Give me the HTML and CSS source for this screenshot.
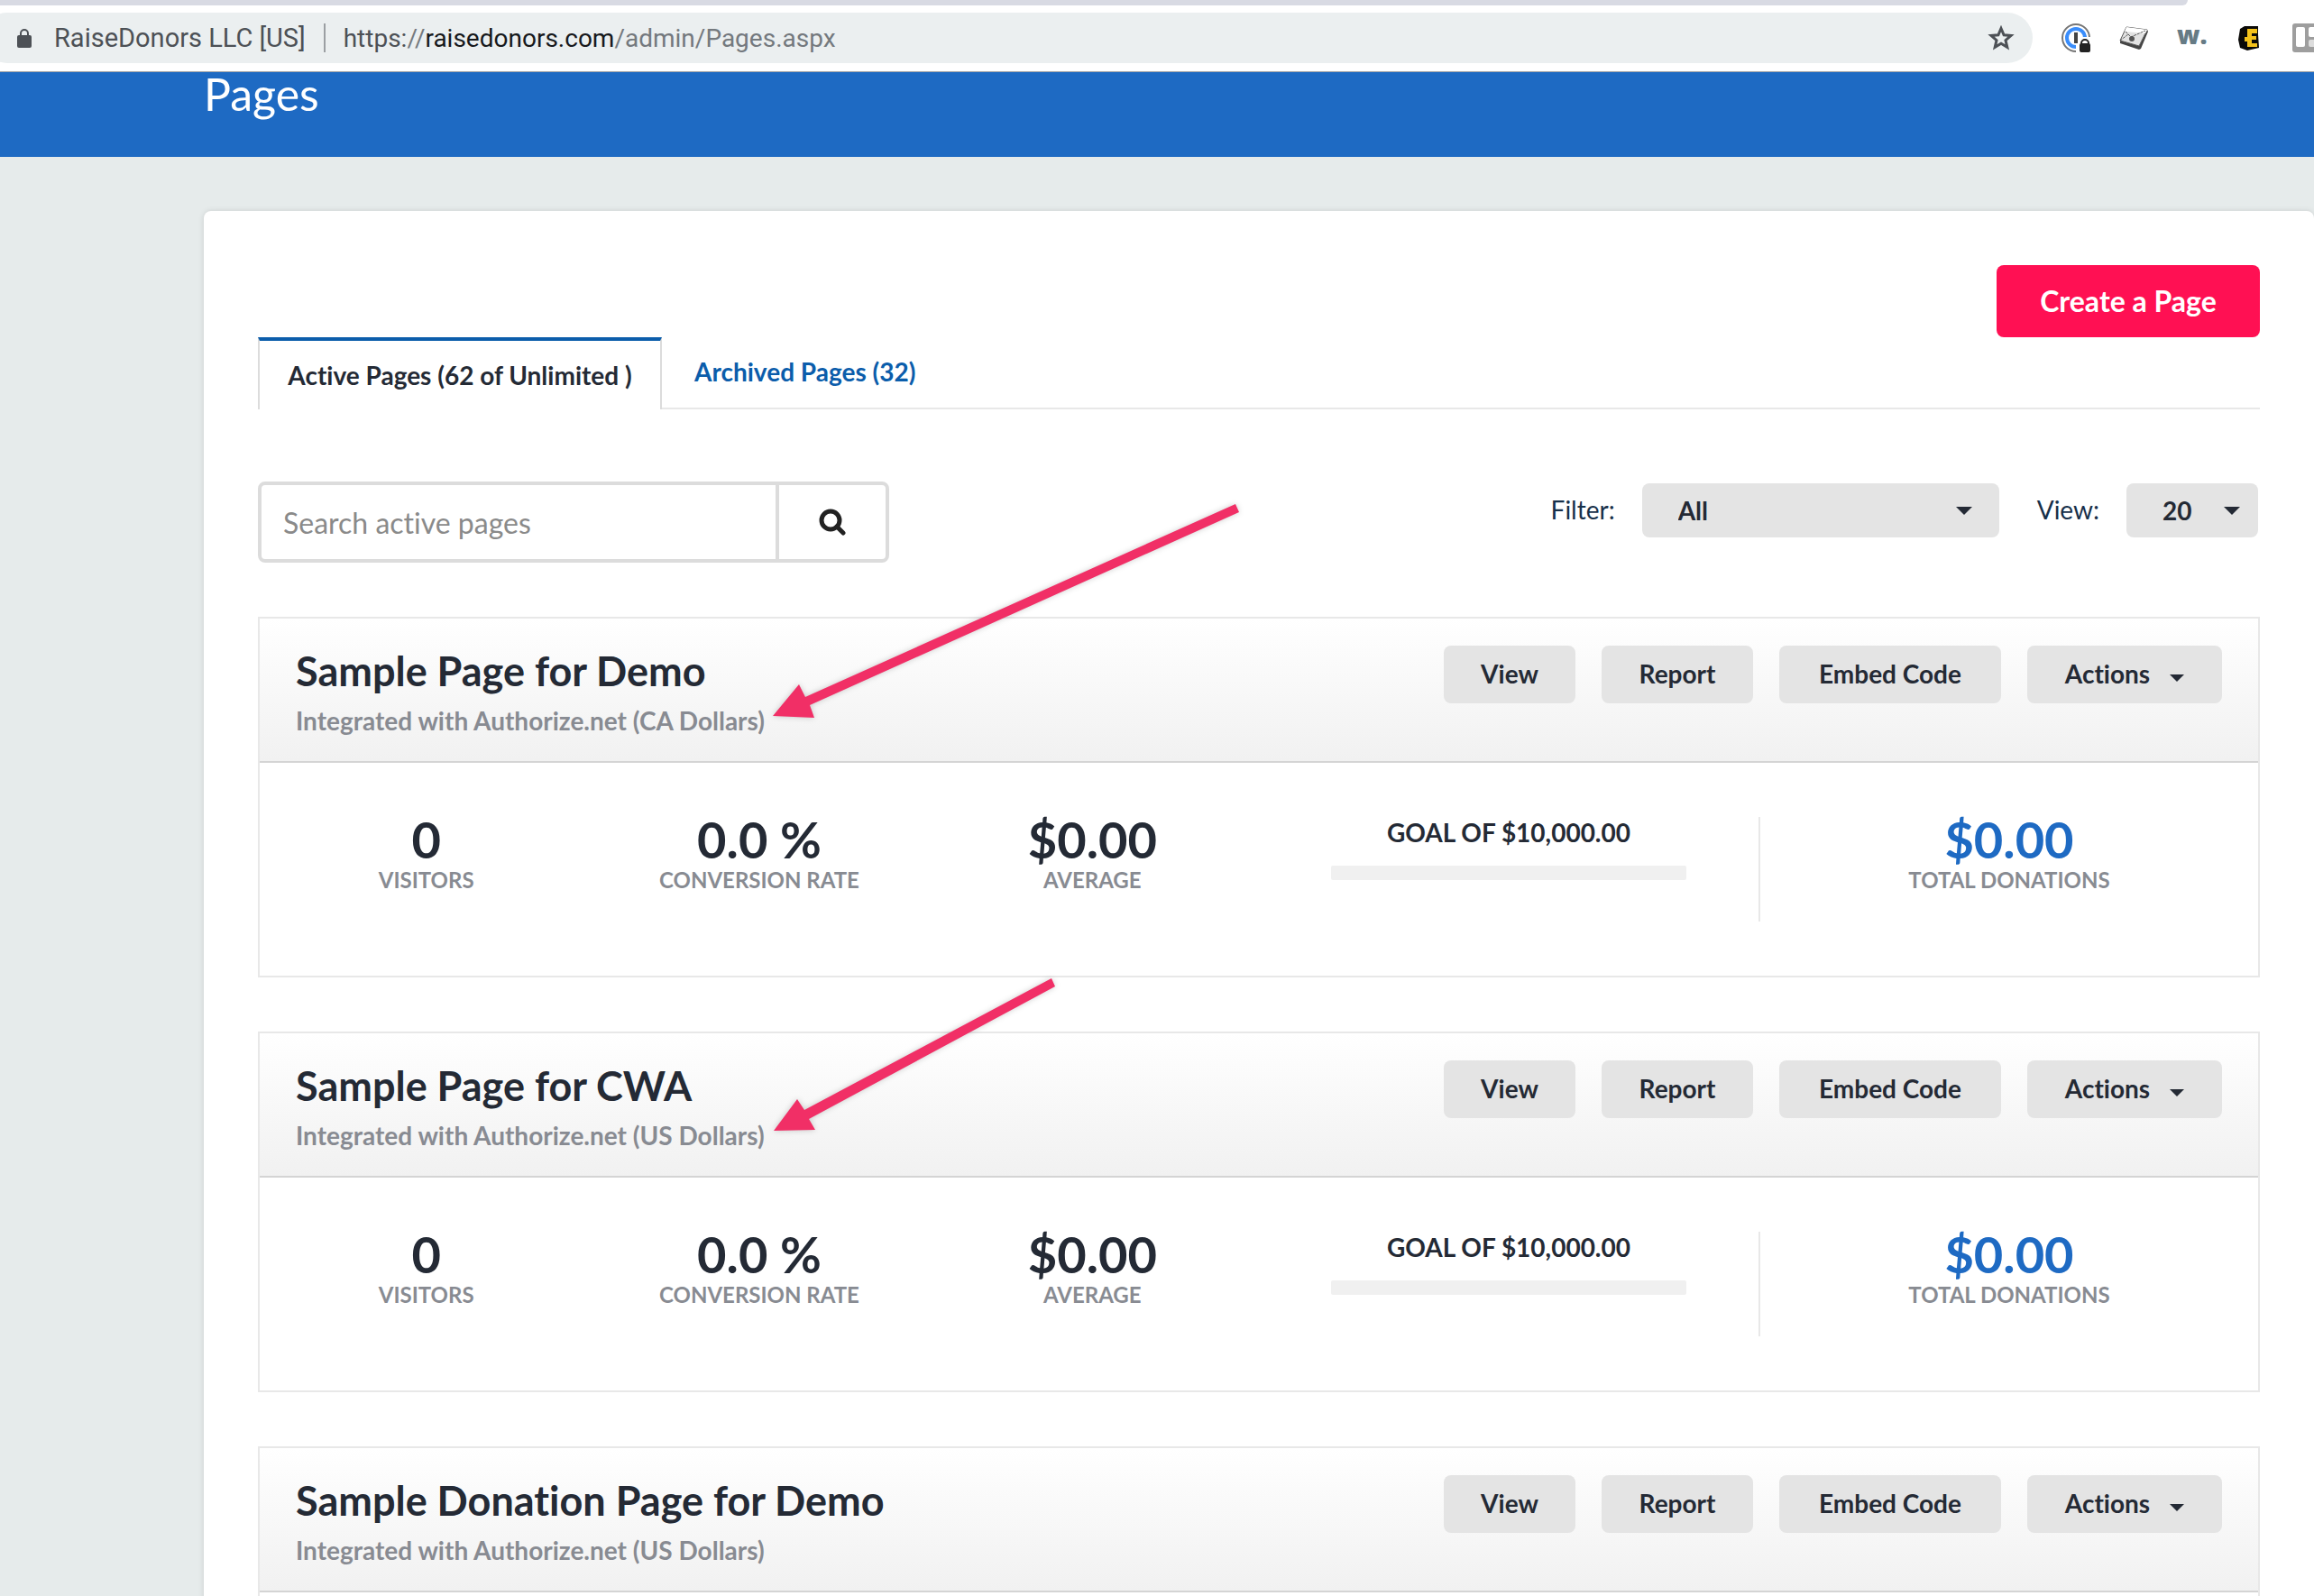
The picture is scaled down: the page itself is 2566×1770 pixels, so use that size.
FILE: index.html
```html
<!DOCTYPE html>
<html lang="en">
<head>
<meta charset="utf-8">
<title>Pages</title>
<link rel="stylesheet" href="styles.css">
</head>
<body>
<div class="browser">
  <div class="tabstrip"></div>
  <div class="toolbar">
    <div class="omnibox">
      <svg class="lock" viewBox="0 0 18 22" width="18" height="22"><rect x="1" y="8" width="16" height="14" rx="2" fill="#4d5156"/><path d="M5 9V6a4 4 0 0 1 8 0v3" fill="none" stroke="#4d5156" stroke-width="2"/></svg>
      <span class="owner">RaiseDonors LLC [US]</span>
      <span class="url"><span class="scheme">https:</span>//<span class="host">raisedonors.com</span>/admin/Pages.aspx</span>
      <svg class="star" viewBox="0 0 30 28" width="30" height="28"><path d="M15 3.500L18.100 10.800L26 11.500L20 16.700L21.800 24.400L15 20.300L8.200 24.400L10 16.700L4 11.500L11.900 10.800Z" fill="none" stroke="#4d5156" stroke-width="3"/></svg>
    </div>
    <div class="extensions">
      <svg viewBox="0 0 32 32" width="32" height="32"><circle cx="16" cy="16" r="15" fill="#fff" stroke="#757575" stroke-width="2"/><circle cx="16" cy="16" r="10" fill="#fff" stroke="#3a8dfb" stroke-width="4"/><path d="M16 15H32V32H16z" fill="#fff"/><rect x="14" y="10" width="4" height="12" fill="#444"/><rect x="20" y="22" width="12" height="10" rx="2" fill="#222"/><path d="M22 23v-1a4 4 0 0 1 8 0v1" fill="none" stroke="#222" stroke-width="2"/></svg>
      <svg viewBox="0 0 32 32" width="32" height="32"><path d="M1 19L1 22L22 29L24 28L32 9L31 7L22 25Z" fill="#444"/><path d="M8 4L31 7L22 25L1 19Z" fill="#e2e2e2" stroke="#555" stroke-width="1"/><path d="M8 4L31 7L29 11L6 9Z" fill="#fff"/><path d="M7 9L13 15L29 8M1 19L10 12" fill="none" stroke="#555" stroke-width="1" stroke-dasharray="3 1"/><circle cx="14" cy="17" r="3" fill="#555"/></svg>
      <span class="w-logo">w.</span>
      <svg viewBox="0 0 32 32" width="32" height="32"><path d="M11 3H26V12L27 27L14 30L6 27L4 18L6 6Z" fill="#0b0a08"/><path d="M14 6H25V11H19V14H24V18H19V22H25V26H14V20H11V15H14Z" fill="#f4c21b"/></svg>
      <svg viewBox="0 0 32 32" width="32" height="32"><rect width="32" height="32" rx="3" fill="#9e9e9e"/><rect x="4" y="4" width="10" height="22" rx="2" fill="#fff"/><rect x="18" y="4" width="10" height="11" rx="2" fill="#fff"/><rect x="18" y="18" width="10" height="8" rx="2" fill="#ddd"/></svg>
    </div>
  </div>
</div>
<header class="banner"><h1>Pages</h1></header>
<main class="viewport">
  <section class="panel">
    <div class="create-row"><button class="create">Create a Page</button></div>
    <nav class="tabs">
      <a class="tab active" href="#active">Active Pages (62 of Unlimited )</a>
      <a class="tab" href="#archived">Archived Pages (32)</a>
    </nav>
    <div class="controls">
      <form class="search">
        <input type="text" placeholder="Search active pages" aria-label="Search active pages">
        <button type="button" aria-label="Search"><svg viewBox="0 0 30 30" width="30" height="30"><circle cx="13" cy="13" r="10" fill="none" stroke="#222" stroke-width="5"/><path d="M20 20L27 27" stroke="#222" stroke-width="5" stroke-linecap="round"/></svg></button>
      </form>
      <div class="filters">
        <label for="filter">Filter:</label>
        <span class="select wide"><select id="filter"><option>All</option></select></span>
        <label for="view">View:</label>
        <span class="select"><select id="view"><option>20</option></select></span>
      </div>
    </div>

    <article class="card">
      <div class="card-head">
        <div><h2>Sample Page for Demo</h2><p>Integrated with Authorize.net (CA Dollars)</p></div>
        <div class="actions"><button class="view">View</button><button class="report">Report</button><button class="embed">Embed Code</button><button class="menu">Actions<i class="caret"></i></button></div>
      </div>
      <div class="stats">
        <div class="stat"><strong>0</strong><span>VISITORS</span></div>
        <div class="stat"><strong>0.0 %</strong><span>CONVERSION RATE</span></div>
        <div class="stat"><strong>$0.00</strong><span>AVERAGE</span></div>
        <div class="goal"><b>GOAL OF $10,000.00</b><div class="bar"></div></div>
        <div class="stat total"><strong>$0.00</strong><span>TOTAL DONATIONS</span></div>
      </div>
      <svg class="arrow first" viewBox="850 550 530 260" width="530" height="260"><path d="M857 794L886 759L893 773L1370 559L1374 568L898 782L903 796Z"/></svg>
    </article>

    <article class="card">
      <div class="card-head">
        <div><h2>Sample Page for CWA</h2><p>Integrated with Authorize.net (US Dollars)</p></div>
        <div class="actions"><button class="view">View</button><button class="report">Report</button><button class="embed">Embed Code</button><button class="menu">Actions<i class="caret"></i></button></div>
      </div>
      <div class="stats">
        <div class="stat"><strong>0</strong><span>VISITORS</span></div>
        <div class="stat"><strong>0.0 %</strong><span>CONVERSION RATE</span></div>
        <div class="stat"><strong>$0.00</strong><span>AVERAGE</span></div>
        <div class="goal"><b>GOAL OF $10,000.00</b><div class="bar"></div></div>
        <div class="stat total"><strong>$0.00</strong><span>TOTAL DONATIONS</span></div>
      </div>
      <svg class="arrow second" viewBox="850 1080 330 190" width="330" height="190"><path d="M858 1254L884 1219L892 1231L1166 1085L1170 1094L897 1241L904 1253Z"/></svg>
    </article>

    <article class="card">
      <div class="card-head">
        <div><h2>Sample Donation Page for Demo</h2><p>Integrated with Authorize.net (US Dollars)</p></div>
        <div class="actions"><button class="view">View</button><button class="report">Report</button><button class="embed">Embed Code</button><button class="menu">Actions<i class="caret"></i></button></div>
      </div>
      <div class="stats"></div>
    </article>
  </section>
</main>
</body>
</html>
```

FILE: styles.css
```css
* { box-sizing: border-box; }
body {
  margin: 0;
  height: 100vh;
  display: flex;
  flex-direction: column;
  overflow: hidden;
  background: #e6ebeb;
  color: #242a35;
  font-family: Lato, "Open Sans", sans-serif;
  font-size: 28px;
  font-variant-ligatures: none;
}
h1, h2, p { margin: 0; }
button, input, select { font: inherit; color: inherit; border: 0; margin: 0; padding: 0; }
svg { display: block; flex: none; }

.browser { flex: none; background: #fff; border-bottom: 1px solid #a5a6a8; font-family: Roboto, sans-serif; }
.tabstrip { height: 6px; margin-right: 140px; background: #d8dae3; border-bottom-right-radius: 12px; }
.toolbar { display: flex; align-items: center; padding: 8px 0 9px; overflow: hidden; }
.omnibox {
  flex: 1;
  display: flex;
  align-items: center;
  height: 56px;
  margin-left: -20px;
  padding: 0 20px 0 38px;
  border-radius: 28px;
  background: #ebeff0;
  color: #4d5156;
}
.owner { margin-left: 24px; padding-right: 20px; border-right: 2px solid #9b9fa3; font-size: 29px; line-height: 32px; }
.url { margin-left: 20px; color: #74797e; }
.scheme { color: #4d5156; }
.host { color: #17191c; }
.star { margin-left: auto; }
.extensions { display: flex; gap: 32px; margin: 0 -8px 0 32px; }
.w-logo { width: 32px; font: 800 28px/24px "Open Sans", sans-serif; color: #667b85; }

.banner { flex: none; height: 94px; padding: 0 226px; background: #1e6ac3; color: #fff; }
.banner h1 { font-weight: 400; font-size: 50px; line-height: 48px; }

.viewport { flex: 1; min-height: 0; overflow-y: auto; scrollbar-width: none; padding: 60px 0 0 226px; }
.panel { padding: 60px; background: #fff; border-radius: 8px; box-shadow: 0 0 6px rgba(0, 0, 0, .12); }

.create-row { display: flex; justify-content: flex-end; }
.create { width: 292px; height: 80px; padding-bottom: 2px; border-radius: 8px; background: #ff1053; color: #fff; font-weight: 700; font-size: 32px; }

.tabs { display: flex; height: 80px; border-bottom: 2px solid #e8e8e8; font-weight: 700; }
.tab { padding: 0 36px; line-height: 76px; color: #0b5dab; text-decoration: none; }
.tab.active { min-width: 448px; height: 80px; padding: 0 28px; border: 2px solid #dcdcdc; border-top: 4px solid #0b5dab; border-bottom: 0; background: #fff; color: #242a35; text-align: center; }

.controls { display: flex; justify-content: space-between; margin: 80px 0 60px; }
.search { display: flex; width: 700px; height: 90px; border: 4px solid #dcdcdc; border-radius: 8px; }
.search input { flex: 1; min-width: 0; padding: 0 24px; background: none; font-size: 32px; }
.search input::placeholder { color: #8a8a8a; opacity: 1; }
.search button { width: 122px; border-left: 4px solid #dcdcdc; background: none; display: grid; place-items: center; }
.filters { display: flex; padding: 2px 2px 0 0; }
.filters label { line-height: 58px; margin: 0 30px 0 42px; color: #17304a; }
.select { position: relative; width: 146px; height: 60px; }
.select.wide { width: 396px; }
.select select { width: 100%; height: 100%; padding: 0 40px; border-radius: 8px; background: #e4e4e4; appearance: none; font-weight: 700; }
.select::after { content: ""; position: absolute; right: 20px; top: 26px; border: 9px solid transparent; border-top-color: #242a35; border-bottom: 0; }
.select.wide::after { right: 30px; }

.card { position: relative; border: 2px solid #e8e8e8; margin-bottom: 60px; }
.card-head {
  display: flex;
  justify-content: space-between;
  height: 160px;
  padding: 30px 40px;
  border-bottom: 2px solid #d4d4d4;
  background: linear-gradient(#fff, #f1f1f1);
}
.card h2 { font-weight: 700; font-size: 45px; line-height: 56px; }
.card p { font-weight: 700; font-size: 28px; line-height: 54px; color: #888b92; }
.actions { display: flex; gap: 29px; }
.actions button { height: 64px; padding-bottom: 2px; border-radius: 8px; background: #e4e4e4; font-weight: 700; }
.actions .view { width: 146px; }
.actions .report { width: 168px; }
.actions .embed { width: 246px; }
.actions .menu { width: 216px; }
.caret { display: inline-block; margin-left: 22px; border: 8px solid transparent; border-top-color: #242a35; border-bottom: 0; vertical-align: 2px; }

.stats { display: grid; grid-template-columns: 2fr 2fr 2fr 3fr 3fr; min-height: 236px; padding: 60px 0; }
.stat { display: flex; flex-direction: column; align-items: center; }
.stat strong { font-size: 56px; line-height: 50px; }
.stat span { font-weight: 700; font-size: 24px; line-height: 40px; color: #888b92; }
.total { border-left: 2px solid #e8e8e8; }
.total strong { color: #1e6ac3; }
.goal { padding: 0 80px; text-align: center; }
.goal b { display: block; line-height: 34px; }
.bar { height: 16px; margin-top: 20px; border-radius: 2px; background: #f0f0f0; }

.arrow { position: absolute; z-index: 1; fill: #f12f66; filter: drop-shadow(0 0 3px rgba(0, 0, 0, .2)); }
.first { left: 562px; top: -136px; }
.second { left: 562px; top: -66px; }
```
